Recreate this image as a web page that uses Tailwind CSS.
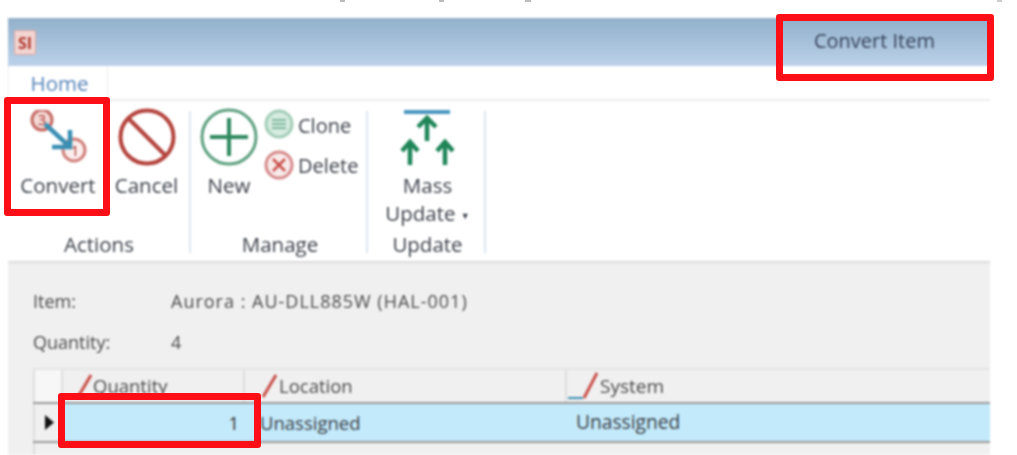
<!DOCTYPE html>
<html><head><meta charset="utf-8"><script src="https://cdn.jsdelivr.net/npm/@tailwindcss/browser@4"></script></head>
<body class="bg-white">
<div class="relative w-[1017px] h-[455px] overflow-hidden bg-white font-['Open_Sans',sans-serif] text-[#3a3f47]">
<!-- clipped descenders of the line above -->
<div class="absolute left-[340px] top-0 w-[5px] h-[2px] bg-[#bbbbbb]"></div>
<div class="absolute left-[439px] top-0 w-[5px] h-[2px] bg-[#bbbbbb]"></div>
<div class="absolute left-[525px] top-0 w-[6px] h-[2px] bg-[#bbbbbb]"></div>
<div class="absolute left-[997px] top-0 w-[5px] h-[2px] bg-[#cccccc]"></div>
<div class="ml-[8px] mt-[18px] w-[982px] absolute left-0 top-0 flex flex-col h-[437px] blur-[0.9px]">
  <!-- title bar -->
  <div class="h-[48px] flex items-center justify-between bg-gradient-to-b from-[#92b0ca] to-[#bbd2ea] pl-[6px] pr-[55px] shrink-0">
    <div class="w-[22px] h-[25px] mb-[-1px] rounded-[2px] bg-[#f2d5d2] border border-[#d9a5a0] flex items-center justify-center text-[#b03a32] text-[16px] font-bold leading-none">SI</div>
    <div class="text-[20px] text-[#36425a] mb-[3px]">Convert Item</div>
  </div>
  <!-- tabs -->
  <div class="h-[35px] flex shrink-0 border-b-2 border-[#eeeeee]">
    <div class="w-[100px] h-[35px] border-l border-r border-[#eeeeee] flex items-center justify-center pl-[3px] text-[20.5px] text-[#5582b8]">Home</div>
  </div>
  <!-- ribbon -->
  <div class="h-[162px] flex shrink-0 border-b-2 border-[#dcdcdc] pt-[10px] pb-[8px]">
    <div class="w-[183px] flex flex-col border-r-2 border-[#dce5ef]">
      <div class="flex flex-1">
        <div class="w-[100px] flex flex-col items-center">
          <svg width="66" height="60" viewBox="0 0 66 60" class="mt-[-1px]">
            <circle cx="17" cy="10" r="10" fill="#f4d9d6" stroke="#c56a64" stroke-width="3"/>
            <text x="17" y="15" text-anchor="middle" font-size="14" font-family="Open Sans" fill="#a8322c">3</text>
            <circle cx="49" cy="40" r="11" fill="#fbeeed" stroke="#d07f79" stroke-width="3"/>
            <text x="50" y="46" text-anchor="middle" font-size="15" font-family="Open Sans" fill="#a8322c">1</text>
            <path d="M20 14 L45 37 M45 20 V37 H27" fill="none" stroke="#3a8fb3" stroke-width="4.5"/>
          </svg>
          <div class="mt-[2px] text-[20.5px] leading-[26px]">Convert</div>
        </div>
        <div class="flex-1 flex flex-col items-center pr-[4px]">
          <svg width="60" height="60" viewBox="0 0 60 60" class="mt-[-4px]">
            <circle cx="30" cy="30" r="26.5" fill="none" stroke="#b4433c" stroke-width="4"/>
            <path d="M12 12 L48 48" stroke="#b4433c" stroke-width="4"/>
          </svg>
          <div class="mt-[5px] text-[20.5px] leading-[26px]">Cancel</div>
        </div>
      </div>
      <div class="text-center text-[20.5px] leading-[26px] mb-[-4px] pl-[1px]">Actions</div>
    </div>
    <div class="w-[177px] flex flex-col border-r-2 border-[#dce5ef]">
      <div class="flex flex-1 pl-[8px]">
        <div class="w-[60px] flex flex-col items-center">
          <svg width="60" height="60" viewBox="0 0 60 60" class="mt-[-4px]">
            <circle cx="30" cy="30" r="27" fill="none" stroke="#5c9f7f" stroke-width="3"/>
            <path d="M30 11V49M11 30H49" stroke="#2f8a5f" stroke-width="4"/>
          </svg>
          <div class="mt-[5px] text-[20.5px] leading-[26px]">New</div>
        </div>
        <div class="flex flex-col gap-[11px] mt-[-2px] ml-[5px]">
          <div class="flex items-center gap-[4px] h-[30px]">
            <svg width="30" height="30" viewBox="0 0 30 30">
              <circle cx="15" cy="15" r="13" fill="#d5ebe0" stroke="#a3cdb8" stroke-width="3"/>
              <path d="M8 11H22M8 15H22M8 19H22" stroke="#7fb89c" stroke-width="2"/>
            </svg>
            <span class="text-[20px] mt-[4px]">Clone</span>
          </div>
          <div class="flex items-center gap-[4px] h-[30px]">
            <svg width="30" height="30" viewBox="0 0 30 30">
              <circle cx="15" cy="15" r="13" fill="#f9eaea" stroke="#d68a8a" stroke-width="3"/>
              <path d="M9 9L21 21M21 9L9 21" stroke="#c9504a" stroke-width="2.5"/>
            </svg>
            <span class="text-[20px] mt-[2px]">Delete</span>
          </div>
        </div>
      </div>
      <div class="text-center text-[20.5px] leading-[26px] mb-[-4px] pl-[3px]">Manage</div>
    </div>
    <div class="w-[118px] flex flex-col items-center border-r-2 border-[#dce5ef] pl-[3px]">
      <svg width="60" height="56" viewBox="0 0 60 56" class="mt-[-1px]">
        <path d="M6 2H52" stroke="#4a96bd" stroke-width="4"/>
        <g fill="none" stroke="#1f8558" stroke-width="4.5">
          <path d="M29 31V9M20 17L29 8L38 17"/>
          <path d="M12 55V33M4 41L12 32L20 41"/>
          <path d="M47 55V33M39 41L47 32L55 41"/>
        </g>
      </svg>
      <div class="mt-[5px] text-[20.5px] leading-[28px]">Mass</div>
      <div class="text-[20.5px] leading-[28px]">Update <span class="text-[9px] align-middle">▼</span></div>
      <div class="text-[20.5px] leading-[26px] mt-auto mb-[-4px]">Update</div>
    </div>
  </div>
  <!-- content -->
  <div class="flex-1 flex flex-col bg-[#f0f0f0] pl-[25px] pt-[26px]">
    <div class="flex text-[18px] leading-[24px] text-[#4a4a4a]"><span class="w-[138px]">Item:</span><span class="tracking-[1px]">Aurora : AU-DLL885W (HAL-001)</span></div>
    <div class="flex text-[18px] leading-[24px] text-[#4a4a4a] mt-[17px]"><span class="w-[138px]">Quantity:</span><span>4</span></div>
    <div class="mt-[14px] flex-1 flex flex-col">
      <div class="flex h-[34px] border-t-2 border-[#e4e4e4]">
        <div class="w-[30px] border-l-2 border-r-2 border-[#dedede] bg-[#f7f7f7]"></div>
        <div class="w-[182px] border-r-2 border-[#dedede] flex items-center gap-[1px] pl-[13px] text-[18.5px] text-[#4a4a4a]">
          <svg width="16" height="24" viewBox="0 0 16 24"><path d="M15 1L2 23" stroke="#c9504a" stroke-width="3"/></svg>
          <span>Quantity</span>
        </div>
        <div class="w-[322px] border-r-2 border-[#dedede] flex items-center gap-[2px] pl-[16px] text-[18.5px] text-[#4a4a4a]">
          <svg width="16" height="24" viewBox="0 0 16 24"><path d="M15 1L2 23" stroke="#c9504a" stroke-width="3"/></svg>
          <span>Location</span>
        </div>
        <div class="flex-1 flex items-center gap-[2px] pl-[1px] text-[19px] text-[#4a4a4a]">
          <svg width="30" height="30" viewBox="0 0 30 30"><path d="M0 27H15" stroke="#3e8fb0" stroke-width="2"/><path d="M29 2L16 27" stroke="#c9504a" stroke-width="3"/></svg>
          <span>System</span>
        </div>
      </div>
      <div class="flex h-[41px] border-t-2 border-b-2 border-[#9a9a9a] shrink-0">
        <div class="w-[30px] bg-[#f0f0f0] border-l-2 border-[#dedede] flex items-center pl-[10px]">
          <svg width="9" height="15" viewBox="0 0 9 15"><path d="M0 0L9 7.5L0 15Z" fill="#111111"/></svg>
        </div>
        <div class="w-[182px] bg-[#c3eafb] flex items-center justify-end pr-[6px] text-[18.5px] text-[#333]">1</div>
        <div class="w-[321px] bg-[#c3eafb] flex items-center pl-[15px] text-[18.5px] text-[#3a3f47]">Unassigned</div>
        <div class="flex-1 bg-[#c3eafb] flex items-center pl-[10px] text-[19.2px] text-[#3a3f47]">Unassigned</div>
      </div>
      <div class="flex-1 border-l-2 border-[#dedede]"></div>
    </div>
  </div>
</div>
<!-- red annotation boxes -->
<div class="absolute left-[776px] top-[14px] w-[218px] h-[67px] border-[7px] border-[#fe0f17] rounded-[3px]"></div>
<div class="absolute left-[4px] top-[97px] w-[106px] h-[119px] border-[7px] border-[#fe0f17] rounded-[3px]"></div>
<div class="absolute left-[58px] top-[393px] w-[203px] h-[55px] border-[7px] border-[#fe0f17] rounded-[3px]"></div>
</div>
</body></html>
